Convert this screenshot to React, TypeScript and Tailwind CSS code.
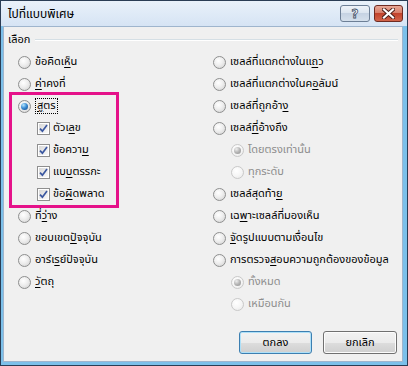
import React from 'react';

type Label = [string, string?, string?];

interface Opt {
  label: Label;
  kind: 'radio' | 'check';
  checked?: boolean;
  disabled?: boolean;
  sub?: boolean;
  focus?: boolean;
}

const LEFT: Opt[] = [
  { kind: 'radio', label: ['ข้อคิดเ', 'ห็', 'น'] },
  { kind: 'radio', label: ['', 'ค่', 'าคงที่'] },
  { kind: 'radio', label: ['', 'สู', 'ตร'], checked: true, focus: true },
  { kind: 'check', label: ['ตัวเ', 'ล', 'ข'], checked: true, sub: true },
  { kind: 'check', label: ['ข้อควา', 'ม', ''], checked: true, sub: true },
  { kind: 'check', label: ['แบ', 'บ', 'ตรรกะ'], checked: true, sub: true },
  { kind: 'check', label: ['ข้อ', 'ผิ', 'ดพลาด'], checked: true, sub: true },
  { kind: 'radio', label: ['ที่', 'ว่', 'าง'] },
  { kind: 'radio', label: ['ขอบเขต', 'ปั', 'จจุบัน'] },
  { kind: 'radio', label: ['อาร์เ', 'ร', 'ย์ปัจจุบัน'] },
  { kind: 'radio', label: ['', 'วั', 'ตถุ'] },
];

const RIGHT: Opt[] = [
  { kind: 'radio', label: ['เซลล์ที่แตกต่างในแ', 'ถ', 'ว'] },
  { kind: 'radio', label: ['เซลล์ที่แตกต่างในค', 'อ', 'ลัมน์'] },
  { kind: 'radio', label: ['เซลล์ที่ถูกอ้า', 'ง', ''] },
  { kind: 'radio', label: ['เซลล์', 'ที่', 'อ้างถึง'] },
  { kind: 'radio', label: ['โดยตรงเท่านั้น'], sub: true, disabled: true, checked: true },
  { kind: 'radio', label: ['ทุกระดับ'], sub: true, disabled: true },
  { kind: 'radio', label: ['เซลล์สุดท้า', 'ย', ''] },
  { kind: 'radio', label: ['เฉ', 'พ', 'าะเซลล์ที่มองเห็น'] },
  { kind: 'radio', label: ['', 'จั', 'ดรูปแบบตามเงื่อนไข'] },
  { kind: 'radio', label: ['การตรวจ', 'ส', 'อบความถูกต้องของข้อมูล'] },
  { kind: 'radio', label: ['ทั้งหมด'], sub: true, disabled: true, checked: true },
  { kind: 'radio', label: ['เหมือนกัน'], sub: true, disabled: true },
];

function Radio({ checked, disabled }: { checked?: boolean; disabled?: boolean }) {
  return (
    <span
      className={
        disabled
          ? 'w-[13px] h-[13px] shrink-0 rounded-full border border-[#c9c9c9] bg-[radial-gradient(circle_at_40%_35%,#ffffff_0%,#f6f6f6_50%,#e6e6e6_100%)] flex items-center justify-center'
          : 'w-[13px] h-[13px] shrink-0 rounded-full border border-[#8e8f8f] bg-[radial-gradient(circle_at_40%_35%,#ffffff_0%,#eeeeee_45%,#cfcfcf_100%)] flex items-center justify-center'
      }
    >
      {checked && !disabled && (
        <span className="w-[7px] h-[7px] rounded-full bg-[radial-gradient(circle_at_35%_30%,#b9e6fd_0%,#3d8fd6_45%,#0d3f7f_100%)]" />
      )}
      {checked && disabled && (
        <span className="w-[7px] h-[7px] rounded-full bg-[radial-gradient(circle_at_35%_30%,#eeeeee_0%,#b5b5b5_50%,#8e8e8e_100%)]" />
      )}
    </span>
  );
}

function Check({ checked }: { checked?: boolean }) {
  return (
    <span className="w-[13px] h-[13px] shrink-0 border border-[#8f8f8f] bg-white p-[1px] flex">
      <span className="flex-1 bg-gradient-to-br from-[#d8d8d8] to-[#fafafa] flex items-center justify-center">
        {checked && (
          <svg width="9" height="9" viewBox="0 0 9 9">
            <path d="M1 4.6 L3.4 7.2 L8 1" fill="none" stroke="#3a57a0" strokeWidth="1.7" />
          </svg>
        )}
      </span>
    </span>
  );
}

function Row({ o }: { o: Opt }) {
  const [a, u, b] = o.label;
  const text = (
    <span className={o.disabled ? 'text-[#8d8d8d]' : 'text-black'}>
      {a}
      {u && <u className="underline-offset-2">{u}</u>}
      {b}
    </span>
  );
  return (
    <div className={'h-[22px] flex items-center ' + (o.kind === 'check' ? 'gap-[3px] ' : 'gap-[4px] ') + (o.sub ? (o.kind === 'check' ? 'pl-[19px]' : 'pl-[18px]') : '')}>
      {o.kind === 'radio' ? <Radio checked={o.checked} disabled={o.disabled} /> : <Check checked={o.checked} />}
      {o.focus ? <span className="border border-dotted border-black px-[1px] leading-[14px]">{text}</span> : text}
    </div>
  );
}

export default function App() {
  return (
    <div className="w-[408px] h-[366px] flex flex-col border border-[#2a3d55] bg-[#7cc0ea] font-['Tahoma','Noto_Sans_Thai','Noto_Sans',sans-serif] text-[11px] leading-[14px] select-none">
      {/* title bar */}
      <div className="h-[25px] shrink-0 flex items-start justify-between pl-[7px] pr-[4px] bg-gradient-to-b from-[#e9f1fa] to-[#d6e4f4]">
        <span className="text-[12px] text-black mt-[6px]">ไปที่แบบพิเศษ</span>
        <div className="flex gap-[4px] mt-[4px]">
          <div className="w-[30px] h-[17px] rounded-[3px] border border-[#6d7f96] bg-[linear-gradient(#eef3f9,#dae4ef_50%,#c6d3e3_50%,#d5e0ec)] flex items-center justify-center">
            <span className="text-[12px] font-bold text-white leading-none [-webkit-text-stroke:0.8px_#3f4f66] font-['DejaVu_Sans',sans-serif]">?</span>
          </div>
          <div className="w-[29px] h-[17px] rounded-[3px] border border-[#6e2b22] bg-[linear-gradient(#e8a897,#d67b66_50%,#c2432c_50%,#d2644a)] flex items-center justify-center">
            <svg width="13" height="11" viewBox="0 0 13 11">
              <path d="M2 1.5 L11 9.5 M11 1.5 L2 9.5" stroke="#4a1d16" strokeWidth="4" strokeLinecap="square" />
              <path d="M2 1.5 L11 9.5 M11 1.5 L2 9.5" stroke="#ffffff" strokeWidth="2.2" strokeLinecap="square" />
            </svg>
          </div>
        </div>
      </div>

      {/* client area */}
      <div className="flex-1 ml-[2px] mr-[4px] mb-[3px] border border-[#9fb5cd] bg-[#f0f0f0] flex flex-col">
        <div className="flex items-center gap-[5px] pl-[4px] pr-[4px] pt-[6px]">
          <span className="text-black">เลือก</span>
          <div className="flex-1 h-[2px] border-t border-[#d5dfe5] border-b-white border-b" />
        </div>

        <div className="flex pl-[14px] mt-[4px]">
          <div className="relative w-[195px] flex flex-col">
            {LEFT.map((o, i) => <Row key={i} o={o} />)}
            <div className="absolute left-[-9px] top-[41px] w-[110px] h-[116px] border-[3px] border-[#e5128a] pointer-events-none" />
          </div>
          <div className="flex flex-col">
            {RIGHT.map((o, i) => <Row key={i} o={o} />)}
          </div>
        </div>

        <div className="flex justify-end gap-[11px] pr-[5px] mt-[16px]">
          <button className="w-[73px] h-[23px] rounded-[3px] border border-[#3c7fb1] shadow-[inset_0_0_0_1px_#aee0f8] bg-[linear-gradient(#f2f2f2,#ebebeb_50%,#dddddd_50%,#cfcfcf)] text-black">
            ตกลง
          </button>
          <button className="w-[74px] h-[23px] rounded-[3px] border border-[#707070] shadow-[inset_0_0_0_1px_#fcfcfc] bg-[linear-gradient(#f2f2f2,#ebebeb_50%,#dddddd_50%,#cfcfcf)] text-black">
            ยกเลิก
          </button>
        </div>
      </div>
    </div>
  );
}
